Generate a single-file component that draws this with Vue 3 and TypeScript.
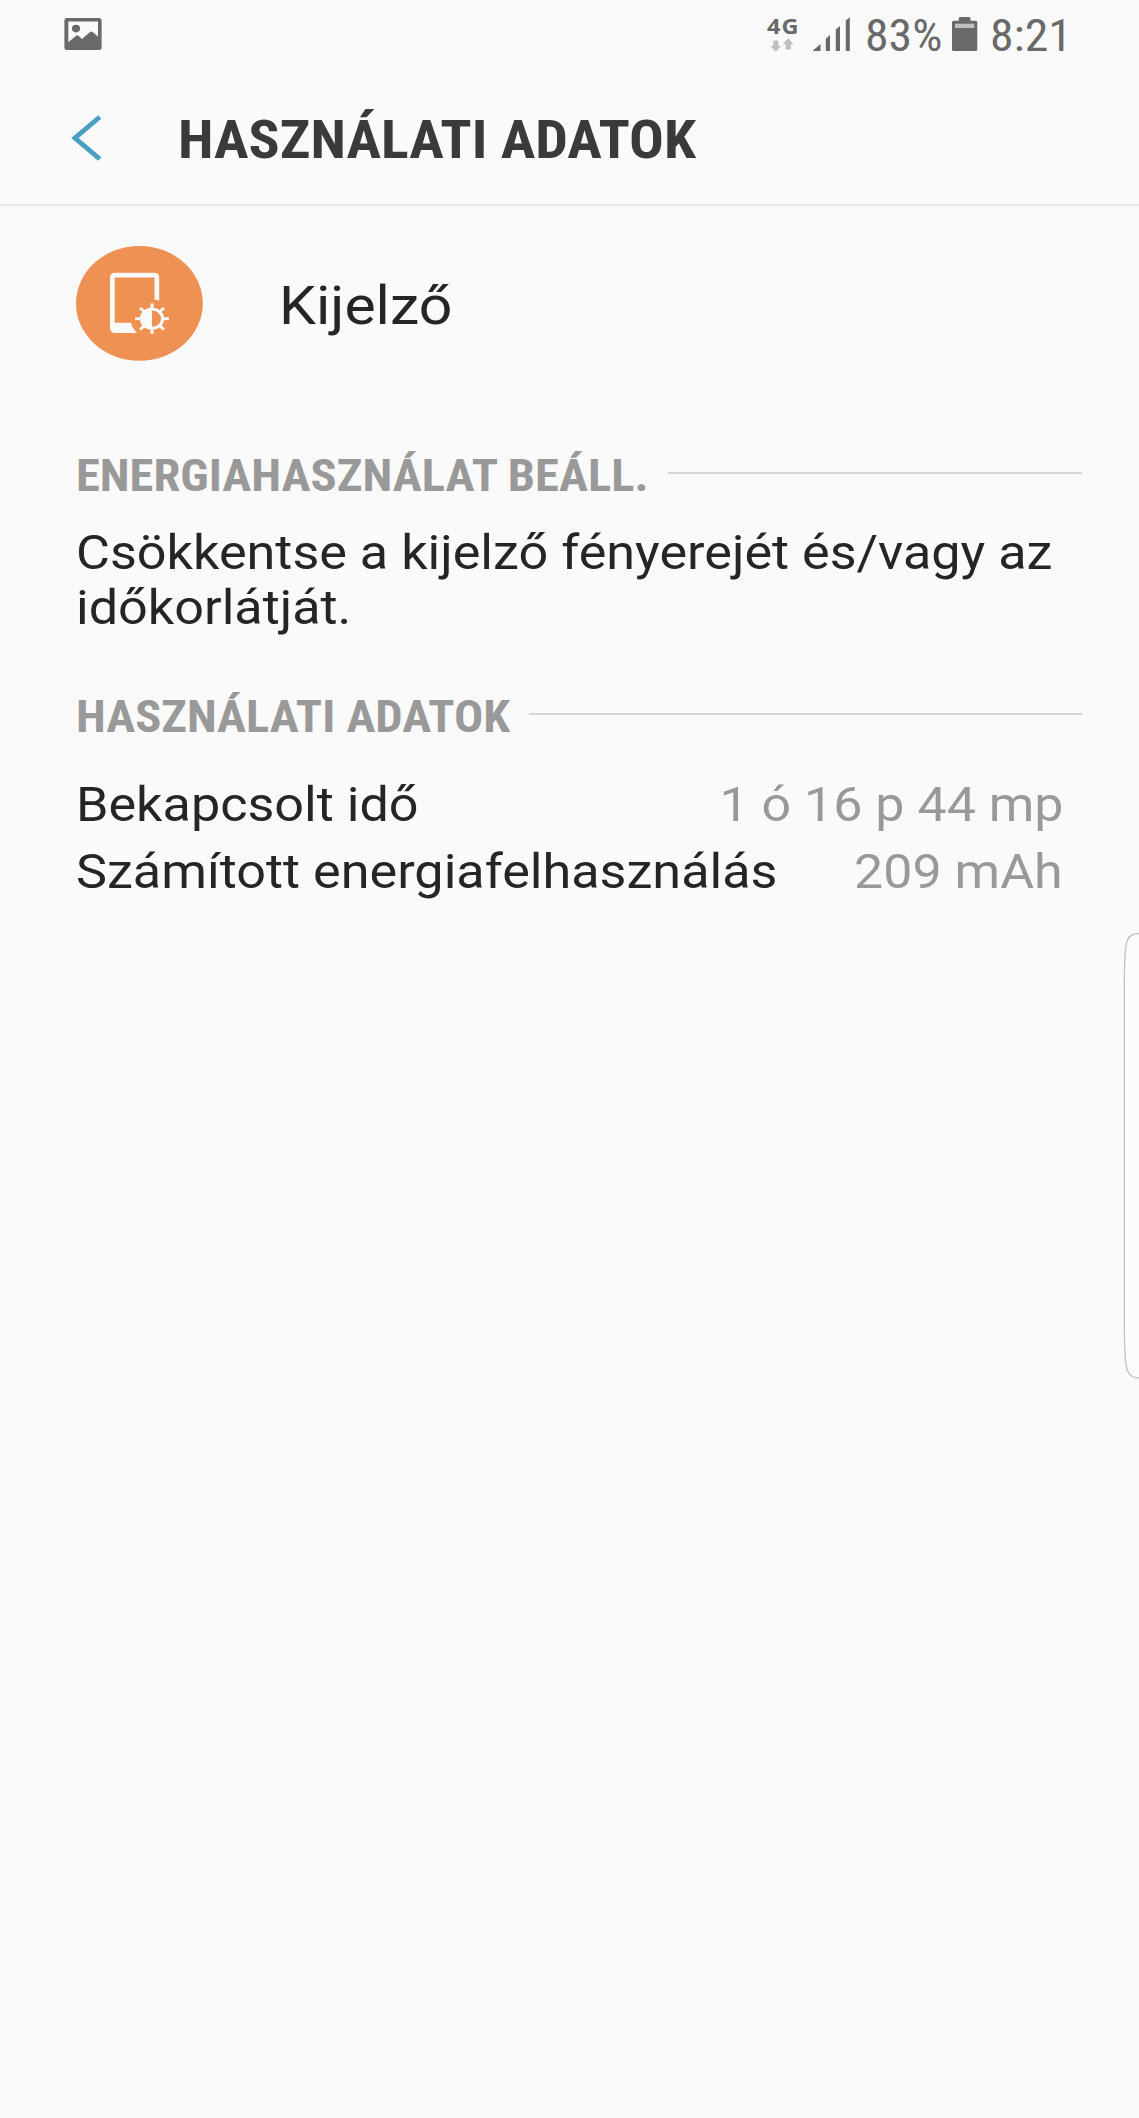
<script setup lang="ts">
interface UsageRow {
  label: string
  value: string
}

const usage: UsageRow[] = [
  { label: 'Bekapcsolt idő', value: '1 ó 16 p 44 mp' },
  { label: 'Számított energiafelhasználás', value: '209 mAh' },
]

const adviceLines: string[] = ['Csökkentse a kijelző fényerejét és/vagy az', 'időkorlátját.']

// Angles of the brightness icon's rays
const rays: number[] = [0, 45, 90, 135, 180, 225, 270, 315]
</script>

<template>
  <div class="screen">
    <div class="status">
      <svg class="gallery" width="38" height="33" viewBox="0 0 38 33">
        <path fill="#696969" fill-rule="evenodd" d="M3 0H35Q37.600 0 37.600 2.500V29.500Q37.600 32 35 32H3Q.4 32 .4 29.500V2.500Q.4 0 3 0ZM4.300 3.400V24.300L11.800 17.900Q13.300 16.600 14.800 17.900L18 21L25.800 14.200Q27.300 13 28.800 14.200L34 18.600V3.400Z" />
        <ellipse cx="12" cy="10.600" rx="4.100" ry="3.800" fill="#696969" />
      </svg>
      <div class="network">
        <span class="generation">4G</span>
        <svg width="30" height="16" viewBox="0 0 30 16" fill="#bfbfbf">
          <path d="M6.300 4.500H11.300V10H14L8.800 15.800L3.500 10H6.300Z" />
          <path d="M18.700 13.500H23.800V8.200H26.500L21.200 2.300L16 8.200H18.700Z" />
        </svg>
      </div>
      <svg class="signal" width="39" height="35" viewBox="0 0 39 35" fill="#696969">
        <path d="M.5 34L8.500 27V34ZM13.800 34V21.800L18 18V34ZM23.800 34V12.500L28 9V34ZM33.800 34V3.500L37.800.2V34Z" />
      </svg>
      <span class="clock battery-level">83%</span>
      <svg class="battery" width="26" height="34" viewBox="0 0 26 34">
        <path fill="#696969" d="M8 0H17Q18.500 0 18.500 1.500V3.700H23.700Q25.300 3.700 25.300 5.300V32.400Q25.300 34 23.700 34H1.600Q0 34 0 32.400V5.300Q0 3.700 1.600 3.700H6.700V1.500Q6.700 0 8 0Z" />
        <path fill="#bfbfbf" d="M3 6.700H22.300V11H3Z" />
      </svg>
      <span class="clock">8:21</span>
    </div>

    <header class="header">
      <svg class="back" width="32" height="48" viewBox="0 0 32 48">
        <path d="M29.700 3L5 24L29.700 45" fill="none" stroke="#489fc2" stroke-width="4.900" />
      </svg>
      <h1 class="title">HASZNÁLATI ADATOK</h1>
    </header>

    <main class="content">
      <div class="app">
        <svg class="app-icon" width="128" height="116" viewBox="0 0 128 116">
          <ellipse cx="63.400" cy="57.400" rx="63.400" ry="57.400" fill="#f09154" />
          <path fill="#fafafa" d="M39.500 26.700H78Q83.200 26.700 83.200 31.500V54.700Q81 53.700 78.500 53.500V31.400H38.700V76.700H55Q56.500 82.500 61.200 87H39.500Q34 87 34 82V31.500Q34 26.700 39.500 26.700Z" />
          <g transform="translate(76 72.700) scale(1.105 1)">
            <circle r="9.600" fill="none" stroke="#fafafa" stroke-width="2.900" />
            <path d="M0 -9.600A9.600 9.600 0 0 0 0 9.600Z" fill="#fafafa" />
            <path v-for="angle in rays" :key="angle" d="M0 -10V-15.200" stroke="#fafafa" stroke-width="2.800" :transform="`rotate(${angle})`" />
          </g>
        </svg>
        <h2 class="app-name">Kijelző</h2>
      </div>

      <div class="section">
        <h3 class="section-title power">ENERGIAHASZNÁLAT BEÁLL.</h3>
        <div class="rule"></div>
      </div>
      <div class="advice">
        <div v-for="line in adviceLines" :key="line"><span class="text">{{ line }}</span></div>
      </div>

      <div class="section">
        <h3 class="section-title data">HASZNÁLATI ADATOK</h3>
        <div class="rule"></div>
      </div>
      <div class="rows">
        <div v-for="row in usage" :key="row.label" class="row">
          <span class="text">{{ row.label }}</span>
          <span class="text value">{{ row.value }}</span>
        </div>
      </div>
    </main>

    <svg class="edge-handle" width="16" height="448" viewBox="0 0 16 448">
      <path d="M16 1.500C8 1.500 4.500 5 3.200 12Q1.300 24 1.300 60V388Q1.300 422 3.200 434C4.500 442 8 446 16 446" fill="#fcfcfc" stroke="#c2c2c2" stroke-width="1.300" />
    </svg>
  </div>
</template>

<style>
body {
  background: #fafafa;
}
</style>

<style scoped>
.screen {
  position: relative;
  width: 1139px;
  height: 2118px;
  overflow: hidden;
  background: #fafafa;
  color: #252525;
  font-family: Roboto, sans-serif;
}

h1,
h2,
h3 {
  margin: 0;
  white-space: nowrap;
}

svg {
  display: block;
  flex: none;
}

.status {
  display: flex;
  align-items: flex-start;
  box-sizing: border-box;
  height: 75px;
  padding-left: 64px;
  color: #696969;
}

.gallery {
  margin-top: 18px;
}

.network {
  width: 30px;
  margin: 16px 0 0 665px;
}

.generation {
  display: block;
  height: 20px;
  font: 700 21px/20px 'Open Sans', sans-serif;
  letter-spacing: 1px;
  transform: scaleX(1.12);
  transform-origin: left;
}

.signal {
  margin: 17px 0 0 15px;
}

.clock {
  width: 80px;
  margin-top: 12px;
  font-size: 44px;
  line-height: 49px;
  font-stretch: 75%;
  transform: scaleX(1.085);
  transform-origin: left;
}

.battery-level {
  width: 74px;
  margin-left: 13.500px;
}

.battery {
  margin: 17px 12px 0 13px;
}

.header {
  display: flex;
  align-items: center;
  height: 129px;
  border-bottom: 2px solid #e7e7e7;
}

.back {
  margin: 0 75.500px 4px 70px;
}

.title {
  color: #3a3a3a;
  font-size: 54px;
  font-weight: 700;
  line-height: 64px;
  font-stretch: 75%;
  transform: scaleX(1.0715);
  transform-origin: left;
}

.content {
  padding: 40px 57px 0 76px;
}

.app {
  display: flex;
  align-items: center;
  height: 116px;
}

.app-name {
  margin: 4px 0 0 74.500px;
  font-size: 54.400px;
  font-weight: 400;
  line-height: 64px;
  transform: scaleX(1.083);
  transform-origin: left;
}

.section {
  display: flex;
  align-items: center;
  height: 52px;
  margin-top: 88px;
}

.section-title {
  flex: none;
  color: #999;
  font-size: 44.500px;
  font-weight: 700;
  line-height: 52px;
  font-stretch: 75%;
  transform: scaleX(1.0895);
  transform-origin: left;
}

.power {
  width: 572px;
  transform: scaleX(1.092);
}

.data {
  width: 433px;
}

.rule {
  flex: 1;
  height: 2px;
  margin: 0 0 6px 20px;
  background: #d5d5d5;
}

.advice {
  margin-top: 24px;
  font-size: 47.500px;
  line-height: 55.300px;
}

.advice + .section {
  margin-top: 54px;
}

.text {
  display: inline-block;
  white-space: nowrap;
  transform: scaleX(1.0975);
  transform-origin: left;
}

.rows {
  margin-top: 28.500px;
  padding-right: 19px;
  font-size: 47.500px;
}

.row {
  display: flex;
  align-items: center;
  justify-content: space-between;
  height: 67.300px;
}

.value {
  color: #999;
  transform: scaleX(1.094);
  transform-origin: right;
}

.edge-handle {
  position: absolute;
  top: 932px;
  right: 0;
}
</style>
